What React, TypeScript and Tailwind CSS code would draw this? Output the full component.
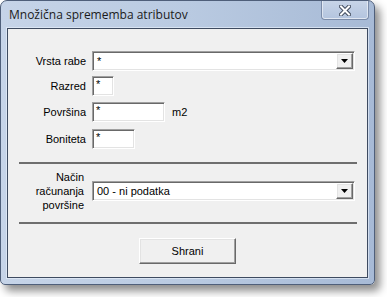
import React from "react";

const sunken =
  "bg-white border border-t-[#a0a0a0] border-l-[#a0a0a0] border-b-white border-r-white shadow-[inset_1px_1px_0_#696969,inset_-1px_-1px_0_#e3e3e3]";
const raised =
  "bg-[#f0f0f0] border border-t-white border-l-white border-b-[#696969] border-r-[#696969] shadow-[inset_-1px_-1px_0_#a0a0a0,inset_1px_1px_0_#e3e3e3]";

function Combo({ text }: { text: string }) {
  return (
    <div className={`${sunken} w-[263px] h-[20px] flex items-stretch p-px`}>
      <div className="flex-1 pl-[3px] leading-[16px] text-[11px] text-black">{text}</div>
      <div className={`${raised} w-[17px] flex items-center justify-center`}>
        <svg width="7" height="4" viewBox="0 0 7 4">
          <path d="M0 0h7L3.5 4z" fill="#000" />
        </svg>
      </div>
    </div>
  );
}

function Field({ w, h = 20 }: { w: number; h?: number }) {
  return (
    <div
      className={`${sunken} pl-[3px] text-[11px] leading-[14px] text-black`}
      style={{ width: w, height: h }}
    >
      *
    </div>
  );
}

function Label({ children }: { children: React.ReactNode }) {
  return <div className="w-[78px] text-right text-[11px] text-black shrink-0">{children}</div>;
}

export default function App() {
  return (
    <div
      className="w-[387px] h-[297px] bg-white overflow-hidden"
      style={{ fontFamily: '"Liberation Sans", Arial, sans-serif' }}
    >
      <div className="w-[375px] h-[285px] rounded-t-[7px] rounded-b-[5px] border border-[#4f5f7a] bg-[linear-gradient(to_right,#c6d4e8,#b9cae1_50%,#a7bad6)] shadow-[5px_6px_8px_rgba(0,0,0,0.45)] flex flex-col">
        <div className="h-[27px] flex items-start shrink-0">
          <div
            className="pl-[8px] pt-[6px] text-[12px] leading-[15px] text-[#1b1b1b]"
            style={{ fontFamily: '"Segoe UI", "Open Sans", "Noto Sans", sans-serif' }}
          >
            Množična sprememba atributov
          </div>
          <div className="ml-auto mr-[5px] w-[48px] h-[19px] rounded-b-[4px] border border-t-0 border-[#7a8ba8] bg-[linear-gradient(to_bottom,#c7d4e7,#b3c4de)] shadow-[inset_0_-1px_0_rgba(255,255,255,0.6),inset_1px_0_0_rgba(255,255,255,0.5),inset_-1px_0_0_rgba(255,255,255,0.5)] flex items-center justify-center">
            <svg width="12" height="11" viewBox="0 0 12 11">
              <path d="M2 1.5 L10 9.5 M10 1.5 L2 9.5" stroke="#3f4a5c" strokeWidth="4" strokeLinecap="square" />
              <path d="M2 1.5 L10 9.5 M10 1.5 L2 9.5" stroke="#ffffff" strokeWidth="2" strokeLinecap="square" />
            </svg>
          </div>
        </div>
        <div className="mx-[6px] h-[250px] border border-[#3e4b60] shadow-[0_0_0_1px_rgba(230,238,250,0.7)] bg-[#f0f0f0] flex flex-col">
          <div className="pt-[22px] flex flex-col">
            <div className="flex items-center gap-[6px]">
              <Label>Vrsta rabe</Label>
              <Combo text="*" />
            </div>
            <div className="flex items-center gap-[6px] mt-[5px]">
              <Label>Razred</Label>
              <Field w={22} />
            </div>
            <div className="flex items-center gap-[6px] mt-[6px]">
              <Label>Površina</Label>
              <Field w={73} />
              <span className="ml-[1px] text-[11px] text-black">m2</span>
            </div>
            <div className="flex items-center gap-[6px] mt-[7px]">
              <Label>Boniteta</Label>
              <Field w={43} />
            </div>
          </div>
          <div className="ml-[11px] w-[338px] h-[2px] bg-[#6e6e6e] mt-[13px]" />
          <div className="flex items-center gap-[6px] mt-[6px]">
            <div className="w-[76px] text-right text-[11px] leading-[14px] text-black shrink-0">
              Način
              <br />
              računanja
              <br />
              površine
            </div>
            <div className="ml-[2px]">
              <Combo text="00 - ni podatka" />
            </div>
          </div>
          <div className="ml-[11px] w-[338px] h-[2px] bg-[#6e6e6e] mt-[10px]" />
          <div className="flex justify-center mt-[14px]">
            <div className={`${raised} w-[97px] h-[26px] flex items-center justify-center text-[11px] text-black`}>
              Shrani
            </div>
          </div>
        </div>
      </div>
    </div>
  );
}
